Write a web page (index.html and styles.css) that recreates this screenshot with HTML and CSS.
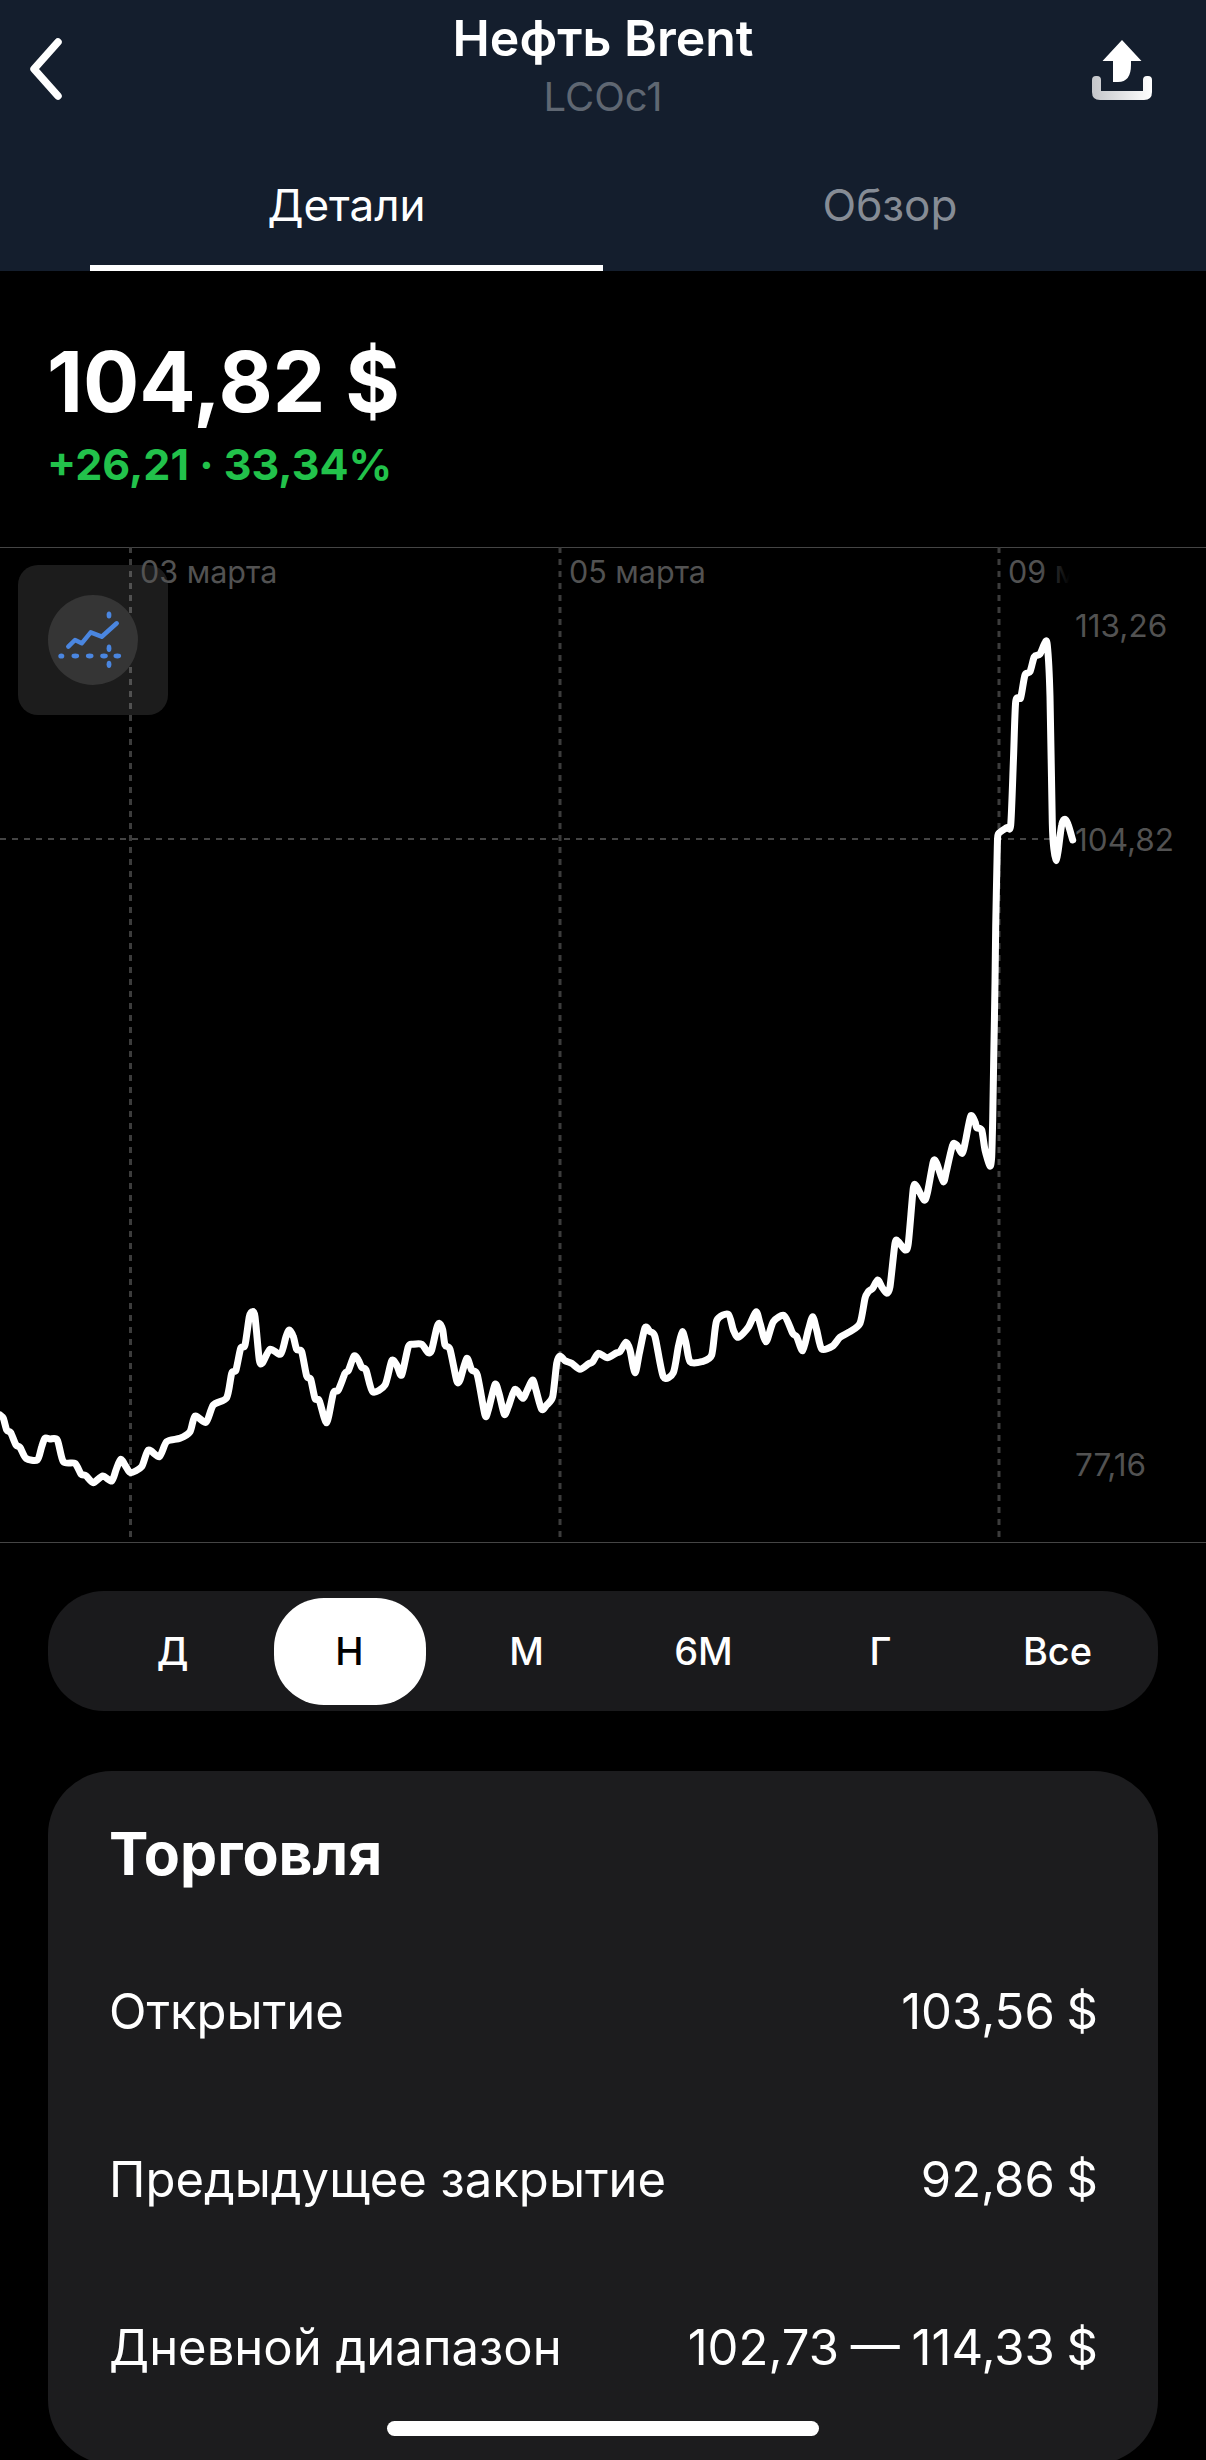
FILE: index.html
```html
<!DOCTYPE html>
<html lang="ru">
<head>
<meta charset="utf-8">
<title>Нефть Brent</title>
<link rel="stylesheet" href="styles.css">
</head>
<body>
<div class="screen">
  <header class="header">
    <div class="topbar">
      <svg class="back" viewBox="0 0 40 66"><path d="M32 6 L8 33 L32 60" /></svg>
      <div class="titles">
        <div class="title">Нефть Brent</div>
        <div class="ticker">LCOc1</div>
      </div>
      <svg class="share" viewBox="0 0 60 60">
        <defs><linearGradient id="tray" x1="0" x2="1" y1="0" y2="0"><stop offset="0" stop-color="#c4c6ca"/><stop offset="1" stop-color="#ffffff"/></linearGradient></defs>
        <path fill="#fff" d="M30 0 L49.5 21 H39 V25 Q39 42 26 42 H21 V21 H10.5Z"/>
        <path fill="url(#tray)" d="M0 40 Q0 36 4 36 H5 Q9 36 9 40 V51 H51 V40 Q51 36 55 36 H56 Q60 36 60 40 V52 Q60 60 52 60 H8 Q0 60 0 52Z"/>
      </svg>
    </div>
    <nav class="tabs">
      <div class="tab tab-active">Детали</div>
      <div class="tab tab-idle">Обзор</div>
    </nav>
  </header>

  <section class="quote">
    <div class="price">104,82 $</div>
    <div class="change">+26,21 · 33,34%</div>
  </section>

  <section class="chart">
    <svg class="plot" viewBox="0 547 1206 996">
      <line class="grid-v" x1="130.5" y1="547" x2="130.5" y2="1537"/>
      <line class="grid-v" x1="560" y1="547" x2="560" y2="1537"/>
      <line class="grid-v" x1="999" y1="547" x2="999" y2="1537"/>
      <line class="grid-h" x1="0" y1="839" x2="1056" y2="839"/>
      <path id="line" class="price-line" d=""/>
    </svg>
    <div class="tool">
      <div class="tool-circle">
        <svg viewBox="0 0 90 90">
          <polyline class="tool-line" points="20.3,51.7 27,45 33.7,48.3 42.7,37.3 53.7,41.7 68.7,28.3"/>
          <g class="tool-dots">
            <ellipse cx="13.3" cy="61" rx="3" ry="2.6"/><ellipse cx="27.3" cy="61" rx="3.8" ry="2.4"/>
            <ellipse cx="41.7" cy="61" rx="3.8" ry="2.4"/><ellipse cx="56" cy="61" rx="3.8" ry="2.4"/>
            <ellipse cx="69.3" cy="61" rx="3.8" ry="2.4"/>
            <ellipse cx="61" cy="20" rx="2.4" ry="3.6"/><ellipse cx="61" cy="53.3" rx="2.4" ry="3.8"/>
            <ellipse cx="61" cy="69.3" rx="2.4" ry="3.6"/>
          </g>
        </svg>
      </div>
    </div>
    <span class="axis date date-a">03 марта</span>
    <span class="axis date date-b">05 марта</span>
    <span class="axis date date-c">09 марта</span>
    <div class="date-fade"></div>
    <span class="axis val val-a">113,26</span>
    <span class="axis val val-b">104,82</span>
    <span class="axis val val-c">77,16</span>
  </section>

  <div class="range">
    <div class="range-item">Д</div>
    <div class="range-item range-on">Н</div>
    <div class="range-item">М</div>
    <div class="range-item">6М</div>
    <div class="range-item">Г</div>
    <div class="range-item">Все</div>
  </div>

  <section class="card">
    <h2 class="card-title">Торговля</h2>
    <div class="row"><span>Открытие</span><span class="num">103,56 $</span></div>
    <div class="row"><span>Предыдущее закрытие</span><span class="num">92,86 $</span></div>
    <div class="row"><span>Дневной диапазон</span><span class="num">102,73 — 114,33 $</span></div>
  </section>

  <div class="home"></div>
</div>
<script src="chart.js"></script>
</body>
</html>
```

FILE: styles.css
```css
* { box-sizing: border-box; }
html, body { margin: 0; padding: 0; background: #000; }
body { width: 1206px; height: 2460px; overflow: hidden; font-family: Inter, "Liberation Sans", sans-serif; color: #fff; }
.screen { position: relative; width: 1206px; height: 2460px; overflow: hidden; background: #000; }

.header { height: 271px; background: #141e2d; }
.topbar { position: relative; height: 181px; padding-top: 10px; display: flex; justify-content: center; }
.titles { text-align: center; }
.title { font-size: 50px; line-height: 56px; font-weight: 600; }
.ticker { margin-top: 9px; font-size: 40px; line-height: 44px; color: #5f6772; }
.back { position: absolute; left: 26px; top: 36px; width: 40px; height: 66px; fill: none; stroke: #fff; stroke-width: 7.5; stroke-linecap: round; stroke-linejoin: round; }
.share { position: absolute; left: 1092px; top: 40px; width: 60px; height: 60px; }

.tabs { display: flex; height: 90px; padding-left: 90px; padding-right: 29px; }
.tab { text-align: center; font-size: 44px; line-height: 48px; height: 90px; }
.tab-active { width: 513px; border-bottom: 6px solid #fff; }
.tab-idle { flex: 1; color: #868c95; }

.quote { height: 276px; padding: 61px 0 0 47px; }
.price { font-size: 83.5px; line-height: 100px; font-weight: 700; }
.change { margin-top: 8px; font-size: 43px; line-height: 48px; font-weight: 700; color: #22c24b; }

.chart { position: relative; height: 996px; border-top: 1px solid #454545; border-bottom: 1px solid #454545; }
.plot { position: absolute; left: 0; top: -1px; width: 1206px; height: 996px; }
.grid-v { stroke: #3c3c3c; stroke-width: 3; stroke-dasharray: 6 6; }
.grid-h { stroke: #444; stroke-width: 2; stroke-dasharray: 6 6; }
.price-line { fill: none; stroke: #fff; stroke-width: 7; stroke-linecap: round; stroke-linejoin: round; }

.tool { position: absolute; left: 18px; top: 17px; width: 150px; height: 150px; border-radius: 20px; background: rgba(255, 255, 255, 0.11); display: flex; align-items: center; justify-content: center; }
.tool-circle { width: 90px; height: 90px; border-radius: 50%; background: #353535; }
.tool-circle svg { display: block; width: 90px; height: 90px; }
.tool-line { fill: none; stroke: #4a86e0; stroke-width: 4.5; stroke-linecap: round; stroke-linejoin: round; }
.tool-dots { fill: #4a86e0; }

.axis { position: absolute; line-height: 36px; color: #525252; white-space: nowrap; }
.date { top: 6px; font-size: 30.5px; }
.date-a { left: 140px; }
.date-b { left: 569px; }
.date-c { left: 1008px; }
.date-fade { position: absolute; left: 1040px; top: 6px; width: 130px; height: 36px; background: linear-gradient(to right, transparent 0, #000 30px); }
.val { left: 1075px; font-size: 31.5px; }
.val-a { top: 60px; }
.val-b { top: 274px; }
.val-c { top: 899px; }

.range { display: grid; grid-template-columns: repeat(6, 177px); align-items: center; height: 120px; margin: 48px 48px 0; padding-left: 36px; background: #1a1a1c; border-radius: 56px; }
.range-item { justify-self: center; display: flex; align-items: center; justify-content: center; width: 152px; height: 107px; font-size: 38px; font-weight: 500; }
.range-on { background: #fff; color: #000; border-radius: 50px; }

.card { height: 693px; margin: 60px 48px 0; padding: 47px 60px 0 61px; background: #1c1c1e; border-radius: 64px; }
.card-title { margin: 0 0 38px; font-size: 59px; line-height: 72px; font-weight: 700; }
.row { display: flex; justify-content: space-between; height: 168px; font-size: 49px; line-height: 168px; }
.num { word-spacing: -2px; }

.home { position: absolute; left: 387px; top: 2421px; width: 432px; height: 15px; border-radius: 8px; background: #fff; }
```

FILE: chart.js
```js
// Price series, sampled from the chart; each block is [originX, originY, 3x samples].
var blocks = [
  [0, 1250, [0,495,10,505,20,540,32,548,48,585,60,592,78,625,112,630,125,590,135,565,150,567,172,570,190,635,225,640,243,672,258,677,280,698,308,678,335,693,348,660,362,628,378,650,392,668,425,650,445,600,478,620,500,575,540,565,570,545,585,498,618,517,640,465,680,443,695,370,708,360,722,295,735,285,748,200,757,185,765,200,778,330,788,338,810,298,842,312,858,260,868,240,880,260,890,298,905,305,920,378,932,388,945,445,958,452,980,518,1000,430,1015,420,1035,370,1045,362,1062,318,1075,330,1085,352,1098,360,1118,425,1155,405,1175,332,1190,345,1205,375]],
  [400, 1250, [25,290,40,283,65,283,85,308,95,300,110,235,118,220,128,240,135,285,150,298,170,392,180,390,200,325,215,360,232,375,255,495,265,480,285,403,297,430,313,493,325,470,345,418,368,445,382,420,398,390,408,420,425,478,440,465,458,440,470,340,480,318,495,332,515,340,540,358,565,342,578,335,595,310,622,323,650,308,660,305,678,277,690,300,705,368,718,310,735,233,750,245,765,260,790,380,820,368,835,290,847,245,858,280,870,335,905,335,935,315,950,212,985,193,1000,240,1015,262,1045,232,1068,185,1080,220,1098,275,1120,215,1153,197,1178,250,1190,260,1208,302,1225,240,1238,200,1250,240,1265,297,1298,288,1320,262,1350,245,1380,220]],
  [800, 900, [195,1195,205,1175,218,1165,233,1140,245,1160,260,1180,270,1160,285,1030,295,1025,315,1050,325,1030,340,865,350,860,372,900,382,880,400,785,410,790,430,845,440,810,458,735,470,735,487,760,497,720,512,648,525,665,530,683,545,690,555,750,570,798,575,770,578,660,581,480,585,250]],
  [850, 530, [437,1190,442,950,445,912,470,893,482,885,490,700,497,515,512,503,525,435,540,425,553,380,570,372,585,338,592,345,600,500,607,880,612,960,618,992,625,960,635,885,645,868,655,885,668,930]]
];
var pts = [];
blocks.forEach(function (b) {
  for (var i = 0; i < b[2].length; i += 2) pts.push([b[0] + b[2][i] / 3, b[1] + b[2][i + 1] / 3]);
});
var d = 'M' + pts[0][0].toFixed(1) + ' ' + pts[0][1].toFixed(1);
for (var i = 0; i < pts.length - 1; i++) {
  var p0 = pts[Math.max(i - 1, 0)], p1 = pts[i], p2 = pts[i + 1], p3 = pts[Math.min(i + 2, pts.length - 1)];
  var k = 8;
  d += ' C' + (p1[0] + (p2[0] - p0[0]) / k).toFixed(1) + ' ' + (p1[1] + (p2[1] - p0[1]) / k).toFixed(1) +
       ' ' + (p2[0] - (p3[0] - p1[0]) / k).toFixed(1) + ' ' + (p2[1] - (p3[1] - p1[1]) / k).toFixed(1) +
       ' ' + p2[0].toFixed(1) + ' ' + p2[1].toFixed(1);
}
document.getElementById('line').setAttribute('d', d);
```
